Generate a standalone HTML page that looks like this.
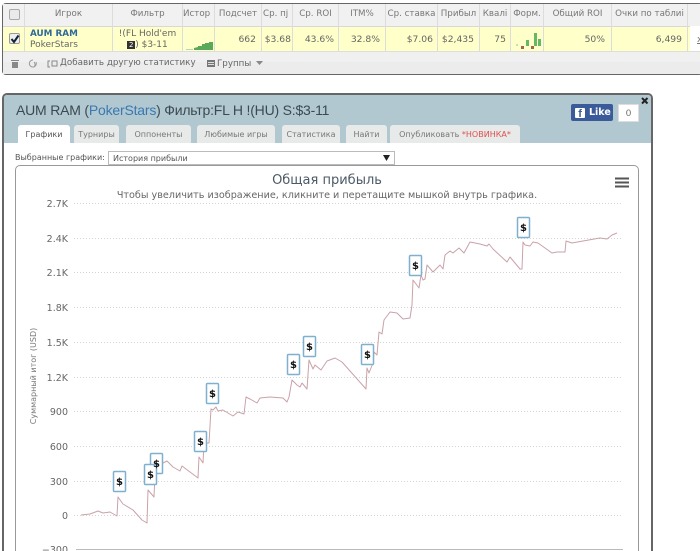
<!DOCTYPE html>
<html style="overflow:hidden;width:700px;height:551px"><head><meta charset="utf-8">
<style>
html,body{margin:0;padding:0;background:#fff}
body{width:700px;height:551px;position:relative;overflow:hidden;font-family:"DejaVu Sans","Liberation Sans",sans-serif;color:#666}
#c{position:absolute;left:0;top:0;width:700px;height:551px;overflow:hidden}
#w{position:absolute;left:0;top:0;width:700px;height:551px;filter:blur(.35px)}
.a{position:absolute;white-space:nowrap}
.h{top:4px;height:22px;line-height:21px;font-size:8.700px;color:#777;text-align:center;overflow:hidden}
.d{top:27px;height:25px;line-height:26px;font-size:9.200px;color:#666;text-align:right;overflow:hidden}
.v{position:absolute;width:1px;background:#dcdcdc}
.t{position:absolute;top:125px;height:18px;background:#e8e9e9;border-radius:3px 3px 0 0;font-size:8px;line-height:19px;text-align:center;color:#777;white-space:nowrap}
</style></head><body><div id="c"><div id="w">

<!-- top table -->
<div class="a" style="left:2px;top:3px;width:700px;height:70px;border:1px solid #666;border-right:0;border-radius:4px;background:#f0f0f0;box-sizing:content-box"></div>
<div class="a" style="left:3px;top:4px;width:697px;height:22px;background:#f1f1f1"></div>
<div class="a" style="left:3px;top:26px;width:687px;height:26px;background:#ffffc9;border-top:1px solid #d8d8d8;border-bottom:1px solid #ddd;box-sizing:border-box"></div>
<div class="a" style="left:690px;top:26px;width:10px;height:26px;background:#fff;border-bottom:1px solid #ddd;box-sizing:border-box"></div>
<div class="a" style="left:3px;top:62px;width:697px;height:12px;background:#ececec"></div>

<div class="v" style="left:24px;top:4px;height:48px"></div>
<div class="v" style="left:112px;top:4px;height:48px"></div>
<div class="v" style="left:182px;top:4px;height:48px"></div>
<div class="v" style="left:214px;top:4px;height:48px"></div>
<div class="v" style="left:261px;top:4px;height:48px"></div>
<div class="v" style="left:292px;top:4px;height:48px"></div>
<div class="v" style="left:338px;top:4px;height:48px"></div>
<div class="v" style="left:385px;top:4px;height:48px"></div>
<div class="v" style="left:437px;top:4px;height:48px"></div>
<div class="v" style="left:479px;top:4px;height:48px"></div>
<div class="v" style="left:510px;top:4px;height:48px"></div>
<div class="v" style="left:543px;top:4px;height:48px"></div>
<div class="v" style="left:611px;top:4px;height:48px"></div>
<div class="v" style="left:687px;top:4px;height:48px"></div>

<div class="a" style="left:9px;top:9px;width:9px;height:9px;border:1px solid #aaa;border-radius:2px;background:#eaeaea"></div>
<div class="a" style="left:9px;top:33px;width:9px;height:9px;border:1px solid #999;border-radius:2px;background:#eee"></div>
<svg class="a" style="left:9px;top:33px" width="12" height="12"><path d="M2.500 6 L5 9 L9.500 2.500" fill="none" stroke="#123" stroke-width="2"/></svg>

<div class="a h" style="left:25px;width:87px">Игрок</div>
<div class="a h" style="left:113px;width:69px">Фильтр</div>
<div class="a h" style="left:183px;width:31px;text-align:left">Истор</div>
<div class="a h" style="left:215px;width:46px">Подсчет</div>
<div class="a h" style="left:262px;width:30px;text-align:left;padding-left:1px">Ср. пј</div>
<div class="a h" style="left:293px;width:45px">Ср. ROI</div>
<div class="a h" style="left:339px;width:46px">ITM%</div>
<div class="a h" style="left:386px;width:51px">Ср. ставка</div>
<div class="a h" style="left:438px;width:41px">Прибыл</div>
<div class="a h" style="left:480px;width:30px">Квалі</div>
<div class="a h" style="left:511px;width:32px">Форм.</div>
<div class="a h" style="left:544px;width:67px">Общий ROI</div>
<div class="a h" style="left:612px;width:75px">Очки по таблиі</div>

<div class="a" style="left:30px;top:28px;font-size:8.800px;font-weight:bold;color:#2f6a9a;line-height:12px">AUM RAM</div>
<div class="a" style="left:30px;top:39px;font-size:9px;color:#666;line-height:12px">PokerStars</div>
<div class="a" style="left:113px;top:28px;width:69px;text-align:center;font-size:9px;line-height:12px;color:#666">!(FL Hold'em</div>
<div class="a" style="left:113px;top:39px;width:69px;text-align:center;font-size:9px;line-height:12px;color:#666"><span style="display:inline-block;width:8px;height:8px;background:#333;color:#fff;font-size:7px;line-height:8px;text-align:center">2</span>) $3-11</div>

<svg class="a" style="left:183px;top:27px" width="31" height="24">
<path d="M3 22h7v1H3z" fill="#b9d8b9"/>
<path d="M11 23V21L15 20V19L19 19V17H22V16H26V15H30V23Z" fill="#5aa85a"/>
</svg>

<div class="a d" style="left:215px;width:41px">662</div>
<div class="a d" style="left:262px;width:29px">$3.68</div>
<div class="a d" style="left:293px;width:41px">43.6%</div>
<div class="a d" style="left:339px;width:41px">32.8%</div>
<div class="a d" style="left:386px;width:47px">$7.06</div>
<div class="a d" style="left:438px;width:36px">$2,435</div>
<div class="a d" style="left:480px;width:26px">75</div>
<div class="a d" style="left:544px;width:61px">50%</div>
<div class="a d" style="left:612px;width:70px">6,499</div>
<div class="a d" style="left:697px;width:6px;text-align:left;color:#777;text-decoration:underline">x</div>

<svg class="a" style="left:511px;top:27px" width="32" height="24">
<rect x="5" y="17" width="2" height="2" fill="#bfe3bf"/>
<rect x="10" y="19" width="3" height="3" fill="#a5634d"/>
<rect x="15" y="13" width="3" height="6" fill="#66b866"/>
<rect x="20" y="19" width="3" height="3" fill="#a5634d"/>
<rect x="23" y="6" width="3" height="13" fill="#66b866"/>
<rect x="27" y="12" width="3" height="7" fill="#66b866"/>
</svg>

<!-- toolbar -->
<svg class="a" style="left:9px;top:58px" width="50" height="12">
<path d="M2 2h8v1H2zM3 4h6v6H3z" fill="#888"/>
<path d="M24 2a3.500 3.500 0 1 0 3 2M25 9a3.500 3.500 0 0 0 0-5" fill="none" stroke="#999" stroke-width="1"/>
<path d="M41 3h-2v6h2M43 3h5v5h-5z" fill="none" stroke="#888" stroke-width="1"/>
</svg>
<div class="a" style="left:60px;top:57px;font-size:8.750px;line-height:12px;color:#666">Добавить другую статистику</div>
<svg class="a" style="left:207px;top:59px" width="10" height="10"><path d="M0 1h8v7H0z" fill="#777"/><path d="M1 3.500h6M1 5.500h6" stroke="#ddd" stroke-width="1"/></svg>
<div class="a" style="left:217px;top:58px;font-size:8.700px;line-height:12px;color:#666">Группы</div>
<svg class="a" style="left:256px;top:61px" width="8" height="6"><path d="M0 0h7L3.500 4z" fill="#888"/></svg>

<!-- modal -->
<div class="a" style="left:2px;top:93px;width:647px;height:470px;border:2px solid #666;border-radius:5px 5px 0 0;background:#fff"></div>
<div class="a" style="left:4px;top:95px;width:647px;height:48px;background:#b2c8d0;border-radius:3px 3px 0 0"></div>
<div class="a" style="left:16px;top:100px;font-family:'Liberation Sans',sans-serif;font-size:14px;letter-spacing:-.2px;line-height:20px;color:#3b4a52">AUM RAM (<span style="color:#3a78b0">PokerStars</span>) Фильтр:FL H !(HU) S:$3-11</div>

<div class="t" style="left:18px;width:52px;background:#fff;color:#555">Графики</div>
<div class="t" style="left:74px;width:45px">Турниры</div>
<div class="t" style="left:126px;width:65px">Оппоненты</div>
<div class="t" style="left:197px;width:78px">Любимые игры</div>
<div class="t" style="left:282px;width:58px">Статистика</div>
<div class="t" style="left:346px;width:41px">Найти</div>
<div class="t" style="left:390px;width:130px">Опубликовать <span style="color:#e05050">*НОВИНКА*</span></div>

<!-- fb -->
<div class="a" style="left:571px;top:104px;width:42px;height:17px;background:#3b5a9a;border-radius:2px"></div>
<div class="a" style="left:575px;top:108px;width:10px;height:10px;background:#fff;border-radius:1px;color:#3b5a9a;font:bold 11px/12px 'Liberation Sans',sans-serif;text-align:right;overflow:hidden">f&nbsp;</div>
<div class="a" style="left:589px;top:104px;font:bold 9.500px/18px 'DejaVu Sans',sans-serif;color:#fff">Like</div>
<div class="a" style="left:618px;top:104px;width:19px;height:16px;background:#fff;border:1px solid #ddd;font:9.500px/17px 'Liberation Sans',sans-serif;text-align:center;color:#666;box-sizing:content-box">0</div>
<svg class="a" style="left:641px;top:97px" width="8" height="8"><path d="M1 1L6.500 6.500M6.500 1L1 6.500" stroke="#222" stroke-width="2"/></svg>

<!-- select -->
<div class="a" style="left:15px;top:152px;font-size:8px;line-height:12px;color:#555">Выбранные графики:</div>
<div class="a" style="left:108px;top:151px;width:285px;height:12px;border:1px solid #bbb;background:#fff;font-size:8px;line-height:13px;color:#555;text-indent:4px;box-sizing:content-box">История прибыли</div>
<svg class="a" style="left:383px;top:155px" width="8" height="7"><path d="M0 0h7L3.500 6z" fill="#222"/></svg>

<!-- chart box -->
<div class="a" style="left:15px;top:165px;width:622px;height:400px;border:1px solid #999;border-radius:5px;background:#fff"></div>
<div class="a" style="left:15px;top:172px;width:624px;text-align:center;font-size:13px;line-height:17px;color:#4d5a66">Общая прибыль</div>
<div class="a" style="left:15px;top:189px;width:624px;text-align:center;font-size:9.650px;line-height:13px;color:#666">Чтобы увеличить изображение, кликните и перетащите мышкой внутрь графика.</div>
<svg class="a" style="left:615px;top:177px" width="15" height="12"><path d="M0 1.500h14M0 5.500h14M0 9.500h14" stroke="#555" stroke-width="2"/></svg>

<svg class="a" style="left:0;top:0" width="700" height="551">
<g stroke="#d4d4d4" stroke-width="1" stroke-dasharray="1 2" fill="none">
<path d="M74 203.500H623M74 238.500H623M74 272.500H623M74 307.500H623M74 342.500H623M74 377.500H623M74 411.500H623M74 446.500H623M74 481.500H623M74 515.500H623"/>
</g>
<path d="M76 549.500H623" stroke="#bbb" stroke-width="1"/>
<g font-family="'DejaVu Sans',sans-serif" font-size="9.500" fill="#666" text-anchor="end">
<text x="68" y="207">2.7K</text><text x="68" y="242">2.4K</text><text x="68" y="276">2.1K</text><text x="68" y="311">1.8K</text><text x="68" y="346">1.5K</text><text x="68" y="381">1.2K</text><text x="68" y="415">900</text><text x="68" y="450">600</text><text x="68" y="485">300</text><text x="68" y="519">0</text><text x="68" y="553">−300</text>
</g>
<text transform="translate(36,376) rotate(-90)" text-anchor="middle" font-family="'DejaVu Sans',sans-serif" font-size="8" fill="#777">Суммарный итог (USD)</text>

<path fill="none" stroke="#c9a2a8" stroke-width="1" stroke-linejoin="round" d="M81 515L90 514L98 511L103 513L110 512L117 516L118 497L123 504L133 510L142 520L147 523L148 490L154 497L155 473L159 464L163 463L167 461L173 467L180 471L182 466L198 478L199 457L203 463L204 443L209 443L211 409L213 410L216 407L218 411L223 410L233 416L238 412L244 414L246 397L250 399L257 403L260 398L270 397L283 398L287 402L289 397L292 380L297 385L300 387L302 383L307 389L309 360L313 369L315 365L321 370L327 361L335 358L342 362L366 389L367 368L369 373L373 363L374 352L377 355L379 332L382 334L384 320L390 312L397 313L403 319L410 318L412 305L413 280L419 288L421 275L423 280L425 279L427 265L433 272L440 265L443 269L445 255L450 251L453 253L459 248L464 253L470 242L480 244L487 246L489 244L493 249L507 262L510 257L520 269L522 269L523 242L525 245L530 246L533 242L538 243L545 248L552 253L557 252L565 252L566 241L572 243L583 241L600 238L607 239L612 235L617 233"/>

<g fill="#fff" stroke="#7fb0d0" stroke-width="1.500">
<rect x="113.500" y="471.500" width="12" height="20" rx="1"/>
<rect x="150.500" y="453.500" width="12" height="20" rx="1"/>
<rect x="144.500" y="464.500" width="12" height="20" rx="1"/>
<rect x="194.500" y="431.500" width="12" height="20" rx="1"/>
<rect x="206.500" y="383.500" width="12" height="20" rx="1"/>
<rect x="287.500" y="354.500" width="12" height="20" rx="1"/>
<rect x="303.500" y="336.500" width="12" height="20" rx="1"/>
<rect x="361.500" y="344.500" width="12" height="20" rx="1"/>
<rect x="409.500" y="255.500" width="12" height="20" rx="1"/>
<rect x="517.500" y="217.500" width="12" height="20" rx="1"/>
</g>
<g font-family="'DejaVu Sans',sans-serif" font-weight="bold" font-size="10" fill="#111" text-anchor="middle">
<text x="119.500" y="485">$</text><text x="156.500" y="467">$</text><text x="150.500" y="478">$</text><text x="200.500" y="445">$</text><text x="212.500" y="397">$</text><text x="293.500" y="368">$</text><text x="309.500" y="350">$</text><text x="367.500" y="358">$</text><text x="415.500" y="269">$</text><text x="523.500" y="231">$</text>
</g>
</svg>
</div></div></body></html>
